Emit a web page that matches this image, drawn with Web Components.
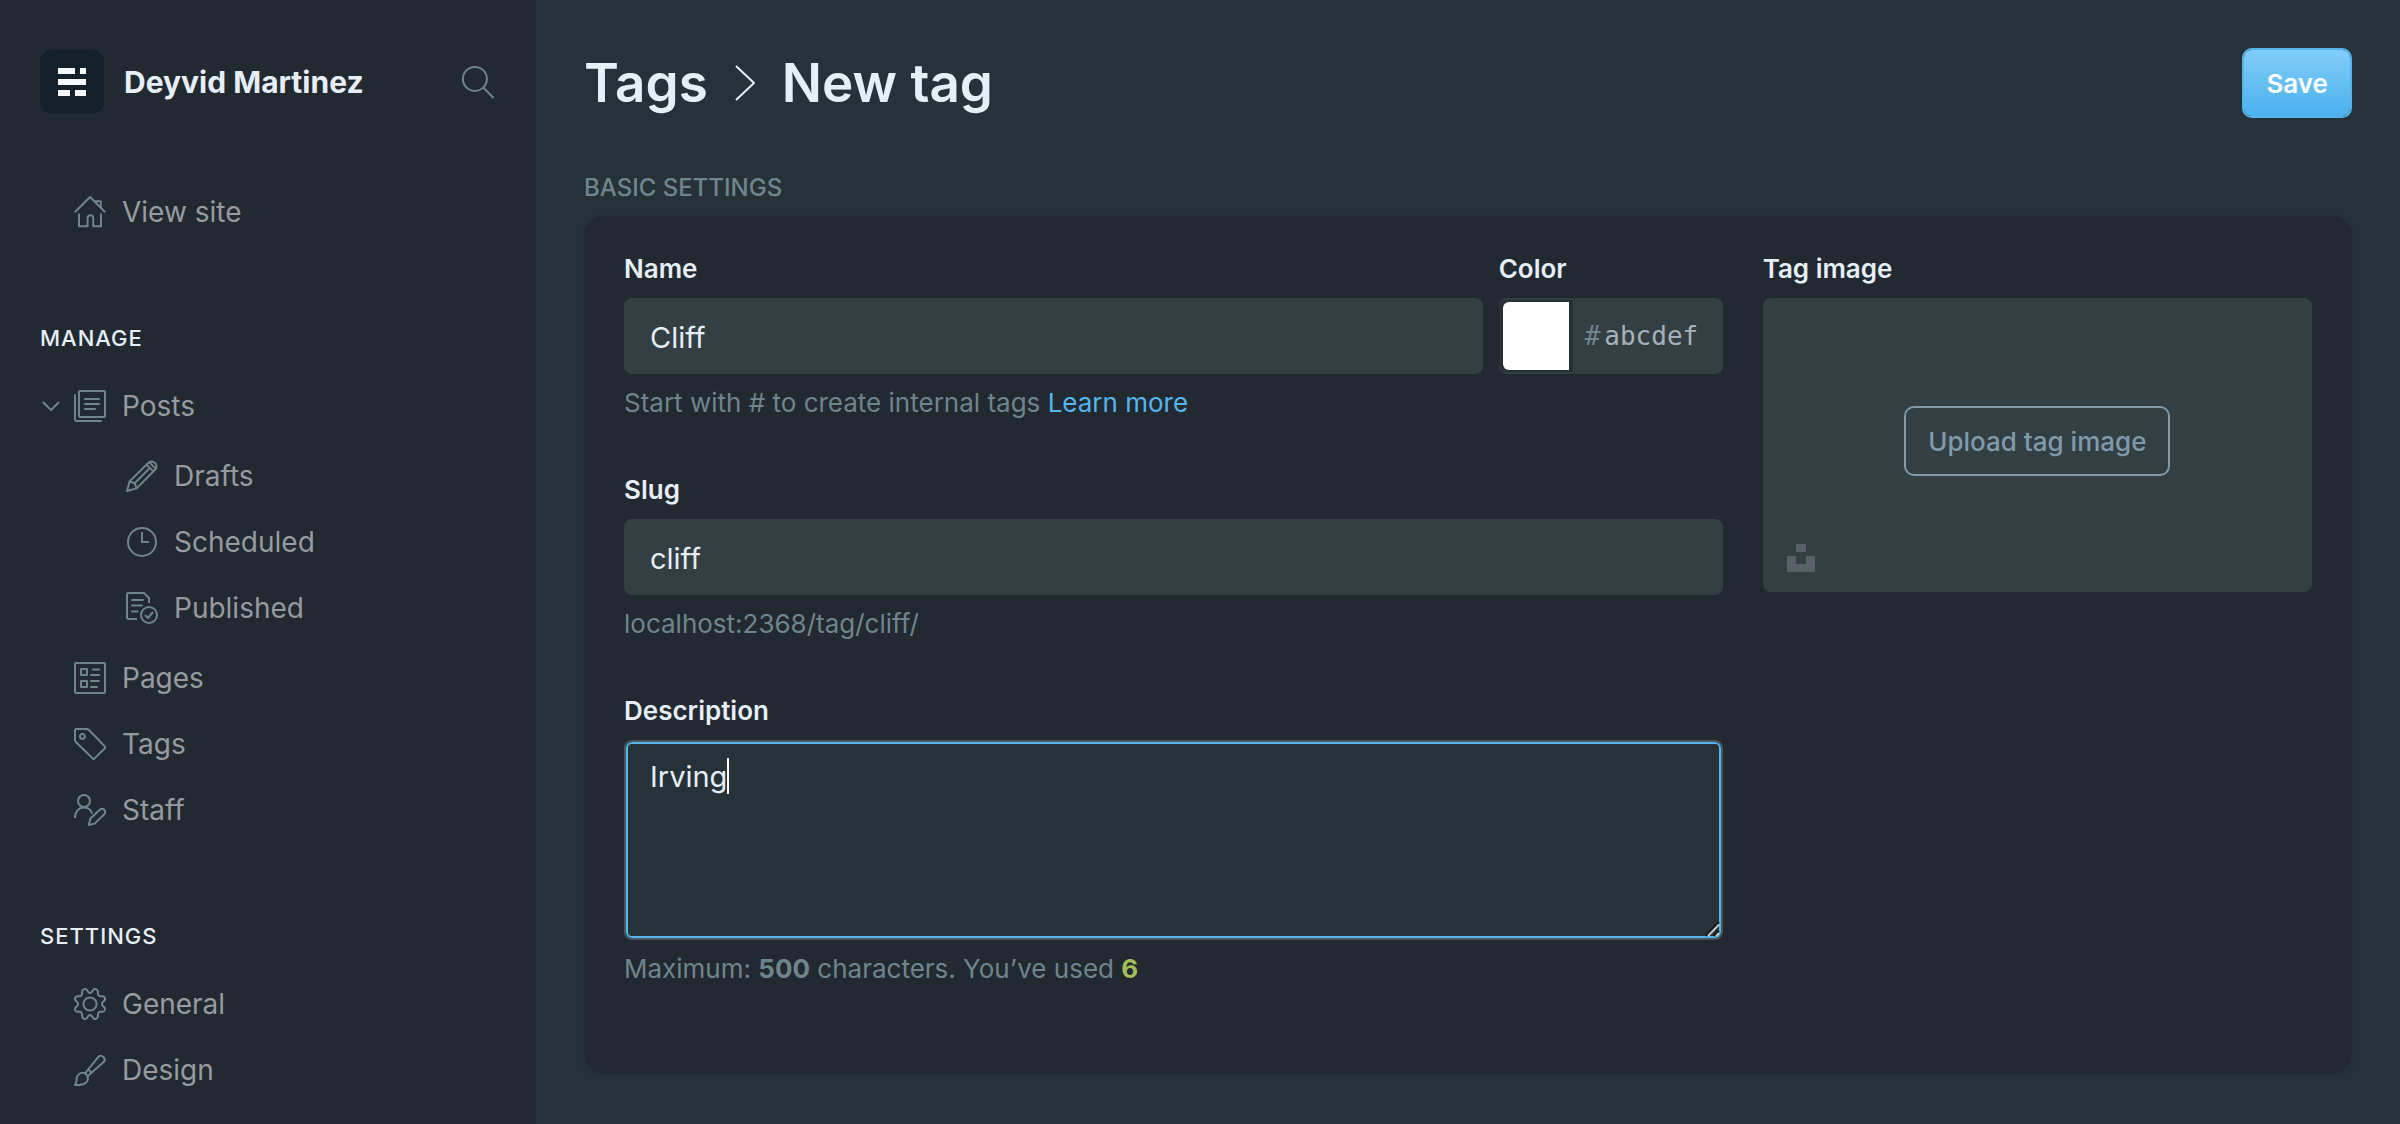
<!DOCTYPE html>
<html lang="en">
<head>
<meta charset="utf-8">
<meta name="viewport" content="width=device-width, initial-scale=1">
<title>New tag</title>
<style>
  :root {
    --bg: #273238;
    --panel: #222930;
    --field: #343f44;
    --text: #e6eef7;
    --nav: #959ba1;
    --muted: #6f858e;
    --blue: #55b5ef;
    --green: #a4bd58;
  }
  html, body { height: 100%; }
  body {
    margin: 0;
    overflow: hidden;
    background: var(--bg);
    color: var(--text);
    font-family: Inter, "Liberation Sans", sans-serif;
    font-size: 26px;
  }
</style>
</head>
<body>
<admin-app></admin-app>
<script>
const ICONS = {
  search: '<circle cx="12.9" cy="12.9" r="12"/><path d="M21.4 21.6 31.6 32"/>',
  home: '<path d="M.8 16.2 16 1 31.2 16.2M20.6 5.2h6.2v6.4M5 17.4v12.8h8.6v-8.2a2.8 2.8 0 0 1 5.6 0v8.2H27V17.4"/>',
  posts: '<rect x="5" y="1" width="26" height="26" rx="1"/><path d="M1 5v24.6c0 .8.6 1.4 1.4 1.4H27M11 9h14M11 14h14M11 19h10" stroke-linecap="round"/>',
  drafts: '<path d="M1 31l2.600-9.600L23 2.200a5 5 0 0 1 6.800 6.800L10.600 28.400zM3.600 21.400l5 1.800 2 5.200M20.600 4.600l6.800 6.800M23.400 2.400l6.200 6.200M8.600 23.200 23.800 8"/>',
  clock: '<circle cx="16" cy="16" r="14"/><path d="M16 6v10h7"/>',
  published: '<path d="M11 27H2.4A1.4 1.4 0 0 1 1 25.600V2.400A1.400 1.400 0 0 1 2.400 1H18l5 5v5"/><path d="M6 8h11M6 13.500h10M6 19.500h5.500" stroke-linecap="round"/><circle cx="23" cy="23" r="8"/><path d="M19 23l3 3 5-6"/>',
  pages: '<rect x="1" y="1" width="30" height="30" rx="1"/><rect x="7" y="7" width="6" height="6"/><rect x="7" y="19" width="6" height="6"/><path d="M19 7.500h6M17 13h8M17 19h8M17 25h6" stroke-linecap="round"/>',
  tag: '<path d="M1 2.400C1 1.600 1.600 1 2.400 1H13l1.800.800L30.800 18.400a1.400 1.400 0 0 1 0 1.800L20.600 30.400a1.400 1.400 0 0 1-1.900 0L1.800 14 1 12.600z"/><circle cx="8.400" cy="8.400" r="2.400"/>',
  staff: '<circle cx="10" cy="7" r="6"/><path d="M1 24c0-6.400 3.800-10.400 9-10.400 4 0 6.800 2 8.200 6M14.800 31l1.600-6.400 9.400-8.800a3.100 3.100 0 0 1 4.500 4.400L20.600 29.600z"/>',
  gear: '<circle cx="16" cy="16" r="6.600"/><path d="M12.720 1.800Q13.560 3.200 14.400 4.200Q16 5.600 17.600 4.200Q18.440 3.200 19.280 1.800Q20.440.700 22 1.200Q23.800 2 23.900 3.600V6Q24.200 8 26 8.200H28.600Q30.400 8.400 31 10.200Q31.300 11.600 30.400 12.600L28.600 14.300Q27.300 16 28.600 17.700L30.400 19.400Q31.300 20.400 31 21.800Q30.400 23.600 28.600 23.800H26Q24.200 24 23.900 26V28.400Q23.800 30 22 30.800Q20.440 31.300 19.280 30.200Q18.440 28.800 17.600 27.800Q16 26.400 14.400 27.800Q13.560 28.800 12.720 30.200Q11.560 31.300 10 30.800Q8.200 30 8.100 28.400V26Q7.800 24 6 23.800H3.400Q1.600 23.600 1 21.800Q.700 20.400 1.600 19.400L3.400 17.700Q4.700 16 3.400 14.300L1.600 12.600Q.700 11.600 1 10.200Q1.600 8.400 3.400 8.200H6Q7.800 8 8.100 6V3.600Q8.200 2 10 1.200Q11.560.700 12.720 1.800Z"/>',
  brush: '<path d="M1 31c2.400-3 .8-5.400 2.200-8.600 1.600-3.800 6.200-4.800 9-2.200s2.200 7.200-1.200 9.200C8 31.200 4.600 31 1 31zM11 19.400 24.600 2.600a3.800 3.800 0 0 1 5.400 5.200L13.800 22M14.600 15.600l3.200 3.200"/>',
  down: '<path d="M1 1l8.500 8.500L18 1"/>',
  right: '<path d="M1 1l18 17L1 35"/>'
};

const define = (name, html, setup) => {
  const template = document.createElement('template');
  template.innerHTML = '<style>*{box-sizing:border-box}a{color:inherit;text-decoration:none}button,input,textarea{font:inherit;color:inherit;margin:0}</style>' + html;
  customElements.define(name, class extends HTMLElement {
    connectedCallback() {
      if (this.shadowRoot) return;
      this.attachShadow({ mode: 'open' }).append(template.content.cloneNode(true));
      if (setup) setup(this, this.shadowRoot);
    }
  });
};

define('ui-icon', `
  <style>
    :host { display: block; flex: none; width: 32px; height: 32px; color: var(--muted); }
    svg { display: block; width: 100%; height: 100%; overflow: visible; fill: none; stroke: currentColor; stroke-width: var(--stroke, 2); stroke-linejoin: round; }
  </style>
  <svg aria-hidden="true"></svg>`, (host, root) => {
  const svg = root.querySelector('svg');
  svg.setAttribute('viewBox', host.getAttribute('box') || '0 0 32 32');
  svg.innerHTML = ICONS[host.getAttribute('name')];
});

define('nav-item', `
  <style>
    :host { display: block; }
    a { display: flex; align-items: center; gap: 16px; height: 66px; padding-left: 74px; color: var(--nav); font-size: 28px; line-height: 34px; }
    :host([child]) a { padding-left: 126px; }
    :host([open]) a { padding-left: 42px; gap: 14px; }
    :host([open]) .label { padding-left: 2px; }
    .toggle { display: none; width: 18px; height: 10px; }
    :host([open]) .toggle { display: block; }
  </style>
  <a href="#"><ui-icon class="toggle" name="down" box="0 0 19 10.500"></ui-icon><ui-icon class="icon"></ui-icon><span class="label"><slot></slot></span></a>`, (host, root) => {
  const icon = document.createElement('ui-icon');
  icon.setAttribute('name', host.getAttribute('icon'));
  root.querySelector('.icon').replaceWith(icon);
});

define('nav-group', `
  <style>
    :host { display: block; }
    h2 { margin: 0; padding: 0 40px 20px; font-size: 22px; line-height: 30px; font-weight: 500; letter-spacing: 1px; text-transform: uppercase; }
  </style>
  <h2></h2><nav><slot></slot></nav>`, (host, root) => {
  root.querySelector('h2').textContent = host.getAttribute('heading');
});

define('app-sidebar', `
  <style>
    :host { display: flex; flex-direction: column; background: var(--panel); padding-top: 50px; overflow: hidden; }
    header { display: flex; align-items: center; gap: 20px; padding: 0 42px 0 40px; }
    .logo { width: 64px; height: 64px; border-radius: 12px; background: #15212a; flex: none; }
    h1 { margin: 0; flex: 1; font-size: 30px; line-height: 36px; font-weight: 700; }
    button { padding: 0; border: 0; background: none; }
    .top { margin-top: 65px; }
    .manage { margin-top: 78px; }
    .children { display: block; padding: 4px 0; }
    .settings { margin-top: 78px; }
  </style>
  <header>
    <svg class="logo" viewBox="0 0 64 64" aria-hidden="true"><path fill="#f7f8fa" d="M18 18h17v6H18zM40 18h6v6h-6zM18 29h28v6H18zM18 40h12v6H18zM35 40h11v6H35z"/></svg>
    <h1>Deyvid Martinez</h1>
    <button aria-label="Search"><ui-icon name="search"></ui-icon></button>
  </header>
  <nav class="top"><nav-item icon="home">View site</nav-item></nav>
  <nav-group class="manage" heading="Manage">
    <nav-item open icon="posts">Posts</nav-item>
    <div class="children">
      <nav-item child icon="drafts">Drafts</nav-item>
      <nav-item child icon="clock">Scheduled</nav-item>
      <nav-item child icon="published">Published</nav-item>
    </div>
    <nav-item icon="pages">Pages</nav-item>
    <nav-item icon="tag">Tags</nav-item>
    <nav-item icon="staff">Staff</nav-item>
  </nav-group>
  <nav-group class="settings" heading="Settings">
    <nav-item icon="gear">General</nav-item>
    <nav-item icon="brush">Design</nav-item>
  </nav-group>`);

define('page-header', `
  <style>
    :host { display: flex; align-items: center; justify-content: space-between; height: 70px; }
    h2 { margin: 0; display: flex; align-items: center; gap: 27px; font-size: 53px; line-height: 66px; font-weight: 600; }
    ui-icon { width: 20px; height: 36px; color: var(--text); }
    button { height: 70px; padding: 0 22px; border: 2px solid #55b3ec; border-radius: 10px; background: linear-gradient(#82cdf8, #4ab2ee) padding-box; color: #fff; font-weight: 600; }
  </style>
  <h2><a href="#">Tags</a><ui-icon name="right" box="0 0 20 36"></ui-icon><span>New tag</span></h2>
  <button>Save</button>`);

const FIELD_STYLE = `
    :host { display: flex; flex-direction: column; min-width: 0; }
    label, .label { display: block; margin-bottom: 16px; font-size: 26px; line-height: 26px; font-weight: 600; }
    .help { margin: 14px 0 0; min-height: 30px; line-height: 30px; color: var(--muted); }`;

define('text-field', `
  <style>${FIELD_STYLE}
    input { width: 100%; height: 76px; padding: 2px 26px 0; border: 0; border-radius: 8px; background: var(--field); font-size: 29px; outline: 0; }
  </style>
  <label for="field"></label><input id="field" type="text"><p class="help"><slot></slot></p>`, (host, root) => {
  root.querySelector('label').textContent = host.getAttribute('label');
  root.querySelector('input').value = host.getAttribute('value');
});

define('color-field', `
  <style>${FIELD_STYLE}
    .box { display: flex; align-items: center; height: 76px; padding: 2px 0; border-radius: 8px; background: var(--field); font: 26px "DejaVu Sans Mono", monospace; color: var(--muted); }
    .swatch { width: 74px; height: 72px; padding: 2px 4px; border: 0; border-radius: 8px 0 0 8px; background: #273035; appearance: none; flex: none; margin-right: 12px; }
    .swatch::-webkit-color-swatch-wrapper { padding: 0; }
    .swatch::-webkit-color-swatch { border: 0; border-radius: 6px 0 0 6px; }
    .hex { width: 100%; min-width: 0; padding: 0 0 0 4px; border: 0; background: none; outline: 0; }
    .hex::placeholder { color: #a5b1b8; opacity: 1; }
  </style>
  <label for="hex">Color</label>
  <div class="box"><input class="swatch" type="color" value="#ffffff" aria-label="Pick a color"><span>#</span><input class="hex" id="hex" type="text" placeholder="abcdef"></div>`);

define('text-area-field', `
  <style>${FIELD_STYLE}
    .wrap { position: relative; }
    textarea { display: block; width: 100%; height: 200px; padding: 15px 24px; border: 2px solid #47555c; border-radius: 8px; box-shadow: inset 0 0 0 2px var(--blue); background: var(--bg); font-size: 29px; line-height: 40px; outline: 0; resize: none; }
    .caret { position: absolute; top: 18px; width: 2px; height: 36px; background: #fff; }
    .grip { position: absolute; right: 3px; bottom: 3px; width: 14px; height: 15px; fill: none; stroke-width: 2; pointer-events: none; }
  </style>
  <label for="field"></label>
  <div class="wrap">
    <textarea id="field"></textarea><span class="caret"></span>
    <svg class="grip" viewBox="0 0 14 15" aria-hidden="true"><path stroke="#101416" d="M0 14 13 0M8 14l5-5"/><path stroke="#c4c8ca" d="M2 14 13 2.500M10 14l3-3"/></svg>
  </div>
  <p class="help"><slot></slot></p>`, (host, root) => {
  const area = root.querySelector('textarea');
  root.querySelector('label').textContent = host.getAttribute('label');
  area.value = host.getAttribute('value');
  const pen = document.createElement('canvas').getContext('2d');
  pen.font = '29px Inter, "Liberation Sans", sans-serif';
  root.querySelector('.caret').style.left = Math.round(26 + pen.measureText(area.value).width) + 'px';
});

define('image-field', `
  <style>${FIELD_STYLE}
    .drop { display: grid; grid-template-rows: 1fr auto 1fr; justify-items: center; height: 294px; padding: 12px 24px 20px; border-radius: 8px; background: var(--field); }
    .upload { grid-row: 2; height: 70px; padding: 0 22px; border: 2px solid #7f9aaa; border-radius: 10px; background: none; color: #7f9aaa; font-weight: 500; }
    .unsplash { grid-row: 3; justify-self: start; align-self: end; padding: 0; border: 0; background: none; }
    svg { display: block; width: 28px; height: 28px; fill: #596067; }
  </style>
  <span class="label">Tag image</span>
  <div class="drop">
    <button class="upload">Upload tag image</button>
    <button class="unsplash" aria-label="Unsplash"><svg viewBox="0 0 28 28"><path d="M9 0h10v8H9zM0 12h9v8h10v-8h9v16H0z"/></svg></button>
  </div>`);

define('tag-form', `
  <style>
    :host { display: block; }
    h3 { margin: 0 0 13px; font-size: 24px; line-height: 30px; font-weight: 500; text-transform: uppercase; color: var(--muted); }
    form { display: grid; grid-template-columns: 2fr 1fr; gap: 40px; padding: 40px 40px 90px; border-radius: 20px; background: var(--panel); box-shadow: 0 2px 8px #0000000d; }
    .fields { display: flex; flex-direction: column; gap: 59px; min-width: 0; }
    .row { display: flex; gap: 16px; }
    .row text-field { flex: 1; }
    .row color-field { width: 224px; }
    .link { color: var(--blue); }
    .used { color: var(--green); }
    b { font-weight: 700; }
  </style>
  <h3>Basic settings</h3>
  <form>
    <div class="fields">
      <div class="row">
        <text-field label="Name" value="Cliff">Start with # to create internal tags <a class="link" href="#">Learn more</a></text-field>
        <color-field></color-field>
      </div>
      <text-field label="Slug" value="cliff">localhost:2368/tag/cliff/</text-field>
      <text-area-field label="Description" value="Irving">Maximum: <b>500</b> characters. You’ve used <b class="used">6</b></text-area-field>
    </div>
    <image-field></image-field>
  </form>`);

define('admin-app', `
  <style>
    :host { display: grid; grid-template-columns: 536px minmax(0, 1fr); height: 100vh; }
    main { padding: 48px 48px 0; overflow: hidden; }
    tag-form { margin-top: 55px; }
  </style>
  <app-sidebar></app-sidebar>
  <main><page-header></page-header><tag-form></tag-form></main>`);
</script>
</body>
</html>
